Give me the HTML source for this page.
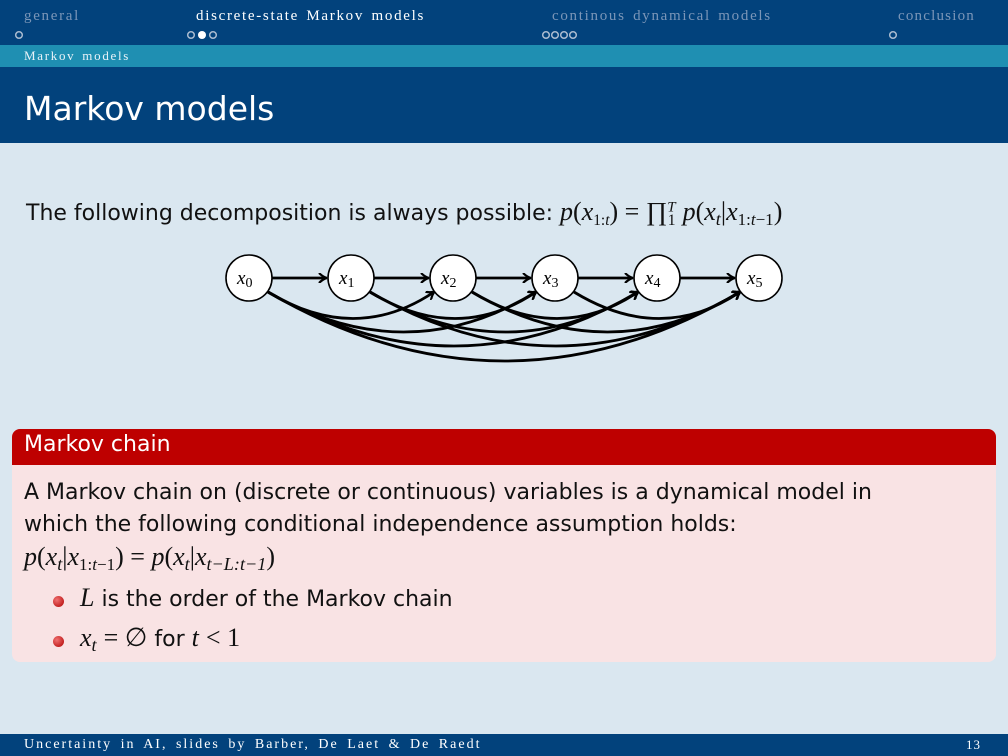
<!DOCTYPE html>
<html><head><style>
body{margin:0;width:1008px;height:756px;overflow:hidden;background:#dae7f0;position:relative;font-family:"DejaVu Sans","Liberation Sans",sans-serif}
.serif{font-family:"Liberation Serif",serif}
.abs{position:absolute}
.m{font-family:"Liberation Serif",serif;font-style:italic;font-size:26px}
.s{font-family:"Liberation Serif",serif;font-size:26px}
sub{font-size:70%;vertical-align:-5px}
.hd{font-size:15px;letter-spacing:1.7px;word-spacing:2px}
</style></head><body>
<div class="abs" style="left:0;top:0;width:1008px;height:45px;background:#02427c"></div>
<div class="abs serif hd" style="left:24px;top:8px;color:#7b96b8">general</div>
<div class="abs serif hd" style="left:196px;top:8px;color:#fff">discrete-state Markov models</div>
<div class="abs serif hd" style="left:552px;top:8px;color:#7b96b8">continous dynamical models</div>
<div class="abs serif hd" style="left:898px;top:8px;color:#7b96b8;letter-spacing:1.2px">conclusion</div>
<svg class="abs" style="left:0;top:0" width="1008" height="45">
<g fill="none" stroke="#aabbd0" stroke-width="1.5">
<circle cx="19" cy="35" r="3.3"/><circle cx="191" cy="35" r="3.3"/><circle cx="213" cy="35" r="3.3"/>
<circle cx="546" cy="35" r="3.3"/><circle cx="555" cy="35" r="3.3"/><circle cx="564" cy="35" r="3.3"/><circle cx="573" cy="35" r="3.3"/>
<circle cx="893" cy="35" r="3.3"/></g>
<circle cx="202" cy="35" r="4" fill="#fff"/>
</svg>
<div class="abs" style="left:0;top:45px;width:1008px;height:22px;background:#1f8fb2"></div>
<div class="abs serif hd" style="left:24px;top:48px;font-size:13px;color:#e8f2f8">Markov models</div>
<div class="abs" style="left:0;top:67px;width:1008px;height:76px;background:#02427c"></div>
<div class="abs" style="left:24px;top:89px;font-size:33px;color:#fff">Markov models</div>

<div class="abs" style="left:26px;top:197px;font-size:22px;color:#111">The following decomposition is always possible: <span class="m">p</span><span class="s">(</span><span class="m">x</span><sub class="serif">1:<i>t</i></sub><span class="s">) = ∏</span><sup class="serif" style="font-size:15px"><i>T</i></sup><sub class="serif" style="margin-left:-8px;font-size:16px">1</sub> <span class="m">p</span><span class="s">(</span><span class="m">x<sub>t</sub></span><span class="s">|</span><span class="m">x</span><sub class="serif" style="font-size:17px">1:<i>t</i>−1</sub><span class="s">)</span></div>

<svg class="abs" style="left:0;top:0" width="1008" height="420">
<defs><marker id="a" markerWidth="10" markerHeight="10" refX="8" refY="5" orient="auto" markerUnits="userSpaceOnUse"><path d="M1,0 Q5,4 9,5 Q5,6 1,10" fill="none" stroke="#000" stroke-width="2.2"/></marker></defs>
<g fill="none" stroke="#000" stroke-width="2.8" marker-end="url(#a)">
<path d="M272,278 H326"/><path d="M374,278 H428"/><path d="M476,278 H530"/><path d="M578,278 H632"/><path d="M680,278 H734"/>
<path d="M268,292 Q355,345 434,292"/><path d="M370,292 Q457,345 536,292"/><path d="M472,292 Q559,345 638,292"/><path d="M574,292 Q661,345 740,292"/>
<path d="M268,292 Q405,372 536,292"/><path d="M370,292 Q507,372 638,292"/><path d="M472,292 Q609,372 740,292"/>
<path d="M268,292 Q455,400 638,292"/><path d="M370,292 Q557,400 740,292"/>
<path d="M268,292 Q505,430 740,292"/>
</g>
<g fill="#fff" stroke="#000" stroke-width="1.6">
<circle cx="249" cy="278" r="23"/><circle cx="351" cy="278" r="23"/><circle cx="453" cy="278" r="23"/><circle cx="555" cy="278" r="23"/><circle cx="657" cy="278" r="23"/><circle cx="759" cy="278" r="23"/></g>
<g font-family="Liberation Serif" font-size="19" fill="#000">
<text x="237" y="284" font-style="italic">x<tspan font-style="normal" font-size="14" dy="3">0</tspan></text>
<text x="339" y="284" font-style="italic">x<tspan font-style="normal" font-size="14" dy="3">1</tspan></text>
<text x="441" y="284" font-style="italic">x<tspan font-style="normal" font-size="14" dy="3">2</tspan></text>
<text x="543" y="284" font-style="italic">x<tspan font-style="normal" font-size="14" dy="3">3</tspan></text>
<text x="645" y="284" font-style="italic">x<tspan font-style="normal" font-size="14" dy="3">4</tspan></text>
<text x="747" y="284" font-style="italic">x<tspan font-style="normal" font-size="14" dy="3">5</tspan></text>
</g></svg>

<div class="abs" style="left:12px;top:429px;width:984px;height:233px;border-radius:8px;background:#f9e3e4;overflow:hidden">
<div style="height:36px;background:#be0000"></div></div>
<div class="abs" style="left:24px;top:432px;font-size:22px;color:#fff">Markov chain</div>
<div class="abs" style="left:24px;top:477px;font-size:22px;color:#111;line-height:32px;width:900px">A Markov chain on (discrete or continuous) variables is a dynamical model in<br>which the following conditional independence assumption holds:<br><span class="m">p</span><span class="s">(</span><span class="m">x<sub>t</sub></span><span class="s">|</span><span class="m">x</span><sub class="serif" style="font-size:17px">1:<i>t</i>−1</sub><span class="s">) = </span><span class="m">p</span><span class="s">(</span><span class="m">x<sub>t</sub></span><span class="s">|</span><span class="m">x<sub>t−L:t−1</sub></span><span class="s">)</span></div>
<div class="abs" style="left:53px;top:596px;width:11px;height:11px;border-radius:50%;background:radial-gradient(circle at 35% 35%,#f07070,#b00000)"></div>
<div class="abs" style="left:80px;top:583px;font-size:22px;color:#111"><span class="m">L</span> is the order of the Markov chain</div>
<div class="abs" style="left:53px;top:636px;width:11px;height:11px;border-radius:50%;background:radial-gradient(circle at 35% 35%,#f07070,#b00000)"></div>
<div class="abs" style="left:80px;top:623px;font-size:22px;color:#111"><span class="m">x<sub>t</sub></span> <span class="s">= ∅</span> for <span class="m">t</span> <span class="s">&lt; 1</span></div>

<div class="abs" style="left:0;top:734px;width:1008px;height:22px;background:#02427c"></div>
<div class="abs serif hd" style="left:24px;top:737px;font-size:14px;color:#fff;letter-spacing:2px;word-spacing:3px">Uncertainty in AI, slides by Barber, De Laet &amp; De Raedt</div>
<div class="abs serif" style="left:966px;top:737px;font-size:13px;color:#fff;letter-spacing:1px">13</div>
</body></html>
